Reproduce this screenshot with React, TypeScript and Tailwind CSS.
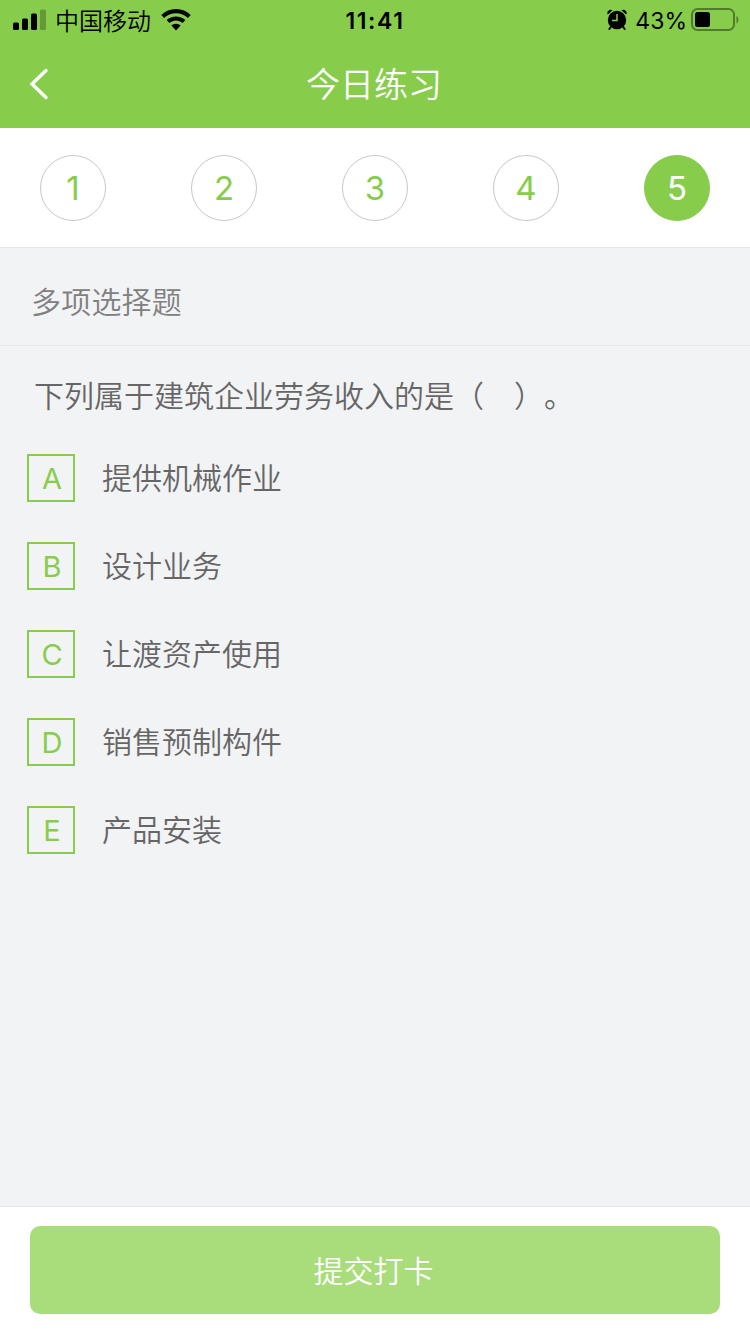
import { useState } from 'react';

interface Option {
  key: string;
  label: string;
}

const questions = [1, 2, 3, 4, 5];

const options: Option[] = [
  { key: 'A', label: '提供机械作业' },
  { key: 'B', label: '设计业务' },
  { key: 'C', label: '让渡资产使用' },
  { key: 'D', label: '销售预制构件' },
  { key: 'E', label: '产品安装' },
];

export default function App() {
  const [current, setCurrent] = useState(5);

  return (
    <div className="flex h-[1334px] w-[750px] flex-col overflow-hidden bg-[#f2f3f5] font-['Inter','Noto_Sans_CJK_SC',sans-serif] font-[350]">
      <header className="h-32 bg-[#87cd4b]">
        <StatusBar />
        <div className="grid h-[88px] grid-cols-[1fr_auto_1fr] items-center text-white">
          <button className="pl-[29px]" aria-label="返回">
            <svg className="h-8 w-5" viewBox="0 0 20 32" fill="none" stroke="currentColor" strokeWidth="3.4" strokeLinecap="round">
              <path d="M17 2.500 3 16l14 13.500" />
            </svg>
          </button>
          <h1 className="pt-px pr-0.5 text-[34px] leading-[85px] font-[350]">今日练习</h1>
        </div>
      </header>

      <nav className="flex h-[120px] items-center justify-between border-b border-[#e6e7e8] bg-white px-10">
        {questions.map((n) => (
          <button
            key={n}
            onClick={() => setCurrent(n)}
            className={`flex size-[66px] items-center justify-center rounded-full border pt-0.5 text-[33px] leading-none font-normal ${
              n === current
                ? 'border-[#87cd4b] bg-[#87cd4b] text-white'
                : 'border-[#c8c8c8] bg-white text-[#87cd4b]'
            }`}
          >
            {n}
          </button>
        ))}
      </nav>

      <h2 className="h-[98px] border-b border-[#e6e8ea] pl-[31px] text-[30px] leading-[109px] font-[350] tracking-[0.2px] text-[#808080]">
        多项选择题
      </h2>

      <main className="flex-1 pt-7">
        <p className="pl-[34px] text-[30px] leading-[45px] text-[#666666] [text-spacing-trim:space-all]">
          下列属于建筑企业劳务收入的是（　）。
        </p>
        <ul className="mt-[35px] space-y-10 pl-[27px]">
          {options.map((option) => (
            <li key={option.key} className="flex h-12 items-center gap-[27px]">
              <span className="flex size-12 items-center justify-center border-2 border-[#87cd4b] pt-px pl-0.5 text-[29px] leading-none font-[380] text-[#87cd4b]">
                {option.key}
              </span>
              <span className="text-[30px] leading-[45px] text-[#666666]">{option.label}</span>
            </li>
          ))}
        </ul>
      </main>

      <footer className="h-32 border-t border-[#e6e8ea] bg-white px-[30px] pt-[19px]">
        <button className="h-[88px] w-full rounded-[10px] bg-[#a9dc7a] pt-0.5 pr-[3px] text-[30px] text-white">提交打卡</button>
      </footer>
    </div>
  );
}

function StatusBar() {
  return (
    <div className="grid h-10 grid-cols-3 items-center text-black">
      <div className="flex items-center pl-[13px]">
        <svg className="h-[22px] w-[33px]" viewBox="0 0 33 22" fill="currentColor">
          <rect x="0" y="13.500" width="6" height="7.500" rx="1.500" />
          <rect x="9" y="9.500" width="6" height="11.500" rx="1.500" />
          <rect x="18" y="4.500" width="6" height="16.500" rx="1.500" />
          <rect x="27" y="0.500" width="6" height="20.500" rx="1.500" opacity="0.25" />
        </svg>
        <span className="ml-[9px] pt-[3px] text-2xl">中国移动</span>
        <svg className="ml-[10px] h-[22px] w-[30px]" viewBox="0 0 30 22" fill="currentColor">
          <path d="M15 0C9.300 0 4.100 2.200.3 5.900l2.700 3C6.200 5.900 10.400 4.200 15 4.200s8.800 1.700 12 4.700l2.700-3C25.900 2.200 20.700 0 15 0Z" />
          <path d="M15 7.400c-3.600 0-6.900 1.400-9.300 3.600l2.700 3c1.800-1.600 4.100-2.600 6.600-2.600s4.800 1 6.600 2.600l2.700-3c-2.400-2.200-5.700-3.600-9.300-3.600Z" />
          <path d="M15 14.700c-1.800 0-3.400.7-4.600 1.800L15 21.600l4.600-5.100c-1.200-1.100-2.800-1.800-4.600-1.800Z" />
        </svg>
      </div>
      <span className="pt-0.5 text-center text-[23px] font-semibold tracking-[1.600px]">11:41</span>
      <div className="flex items-center justify-end pr-[11px]">
        <svg className="h-[22px] w-5" viewBox="0 0 20 22" fill="currentColor">
          <circle cx="10" cy="11" r="9.200" />
          <path d="M.8 5.600C-.8 2.300 2.500-.4 5.500 1.300ZM19.200 5.600c1.600-3.300-1.700-6-4.700-4.300Z" />
          <path d="m3.800 18-1.500 2M16.200 18l1.500 2" stroke="currentColor" strokeWidth="2" strokeLinecap="round" />
          <path d="M10 5v6.500H5" fill="none" stroke="#87cd4b" strokeWidth="1.500" />
        </svg>
        <span className="ml-2 pt-0.5 text-[23px] font-normal">43%</span>
        <svg className="ml-1 h-6 w-12" viewBox="0 0 48 24">
          <rect x="1" y="1" width="42" height="21" rx="5.500" fill="none" stroke="#000" strokeOpacity="0.4" strokeWidth="2" />
          <rect x="4" y="4" width="15" height="15" rx="2.500" />
          <path d="M45.500 8v7.500c2.500-1 2.500-6.500 0-7.500Z" fillOpacity="0.4" />
        </svg>
      </div>
    </div>
  );
}
